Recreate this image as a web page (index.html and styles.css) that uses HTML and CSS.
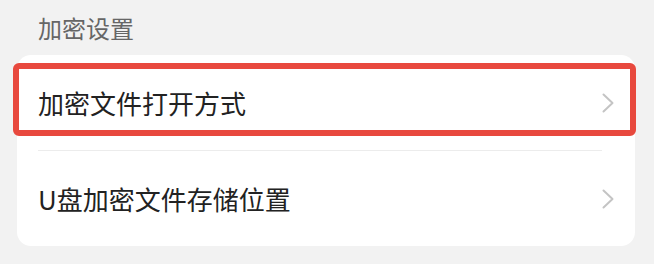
FILE: index.html
```html
<!DOCTYPE html>
<html lang="zh-CN">
<head>
    <meta charset="UTF-8">
    <meta name="viewport" content="width=device-width, initial-scale=1.0">
    <title>加密设置</title>
    <link rel="stylesheet" href="styles.css">
</head>
<body>
    <div class="section-title">加密设置</div>

    <div class="card">
        <div class="row">
            <span class="row-label">加密文件打开方式</span>
            <svg class="chevron" width="12" height="20" viewBox="0 0 12 20">
                <path d="M1.5 1.5 L10.5 10 L1.5 18.5" fill="none" stroke="#c4c4c4" stroke-width="2" stroke-linecap="round" stroke-linejoin="round"/>
            </svg>
            <div class="highlight"></div>
        </div>
        <div class="divider"></div>
        <div class="row">
            <span class="row-label">U盘加密文件存储位置</span>
            <svg class="chevron" width="12" height="20" viewBox="0 0 12 20">
                <path d="M1.5 1.5 L10.5 10 L1.5 18.5" fill="none" stroke="#c4c4c4" stroke-width="2" stroke-linecap="round" stroke-linejoin="round"/>
            </svg>
        </div>
    </div>
</body>
</html>
```

FILE: styles.css
```css
body {
    margin: 0;
    background-color: #f2f2f2;
    font-family: "Noto Sans CJK SC", "Noto Sans", sans-serif;
}

.section-title {
    height: 55px;
    line-height: 56px;
    padding-left: 38px;
    font-size: 24px;
    color: #666;
}

.card {
    margin: 0 19px 0 17px;
    background-color: #fff;
    border-radius: 14px;
}

.row {
    position: relative;
    height: 95px;
    display: flex;
    align-items: center;
    justify-content: space-between;
    padding: 0 21px 0 21px;
}

.row-label {
    font-size: 26px;
    color: #222;
}

.divider {
    height: 1px;
    background-color: #ececec;
    margin: 0 33px 0 21px;
}

.highlight {
    position: absolute;
    left: -4px;
    right: -1px;
    top: 8px;
    height: 61px;
    border: 6px solid #e8493e;
    border-radius: 6px;
}
```
